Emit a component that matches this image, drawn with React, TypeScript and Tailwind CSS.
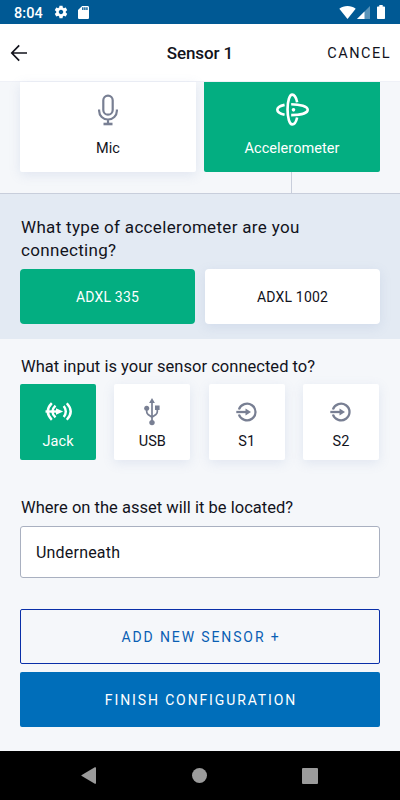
import type { ReactNode } from "react";
import clsx from "clsx";

const INPUTS = [
  { label: "Jack", icon: <JackIcon />, active: true },
  { label: "USB", icon: <UsbIcon />, active: false },
  { label: "S1", icon: <InputIcon />, active: false },
  { label: "S2", icon: <InputIcon />, active: false },
];

function StatusBar() {
  return (
    <div className="flex h-6 shrink-0 items-center bg-[#005994] pl-[14px] pr-[15px] text-white">
      <span className="w-[40px] pt-[3px] text-[14.5px] font-medium leading-6 tracking-[0.1px]">8:04</span>
      <svg className="h-[14px] w-[14px]" viewBox="1 1 22 22" fill="currentColor">
        <path d="M19.43 12.98c.04-.32.07-.64.07-.98s-.03-.66-.07-.98l2.11-1.65c.19-.15.24-.42.12-.64l-2-3.46c-.12-.22-.39-.3-.61-.22l-2.49 1c-.52-.4-1.08-.73-1.69-.98l-.38-2.65C14.46 2.18 14.25 2 14 2h-4c-.25 0-.46.18-.49.42l-.38 2.65c-.61.25-1.17.59-1.69.98l-2.49-1c-.23-.09-.49 0-.61.22l-2 3.46c-.13.22-.07.49.12.64l2.11 1.65c-.04.32-.07.65-.07.98s.03.66.07.98l-2.11 1.65c-.19.15-.24.42-.12.64l2 3.46c.12.22.39.3.61.22l2.49-1c.52.4 1.08.73 1.69.98l.38 2.65c.03.24.24.42.49.42h4c.25 0 .46-.18.49-.42l.38-2.65c.61-.25 1.17-.59 1.69-.98l2.49 1c.23.09.49 0 .61-.22l2-3.46c.12-.22.07-.49-.12-.64l-2.11-1.65zM12 15.5c-1.93 0-3.5-1.57-3.5-3.5s1.57-3.5 3.5-3.5 3.5 1.57 3.5 3.5-1.57 3.5-3.5 3.5z" />
      </svg>
      <svg className="ml-[10px] h-[13px] w-[11px]" viewBox="4 2 16 20" preserveAspectRatio="none" fill="currentColor">
        <path d="M18 2h-8L4.02 8 4 20c0 1.1.9 2 2 2h12c1.1 0 2-.9 2-2V4c0-1.1-.9-2-2-2zm-6 6h-2V4h2v4zm3 0h-2V4h2v4zm3 0h-2V4h2v4z" />
      </svg>
      <svg className="ml-auto h-[13px] w-[17px]" viewBox="0 0 17 13" fill="currentColor">
        <path d="M8.5 13 .3 2.8C2.6 1 5.4 0 8.5 0s5.9 1 8.2 2.8z" />
      </svg>
      <svg className="ml-px h-[13px] w-[13px]" viewBox="0 0 13 13" fill="currentColor">
        <path d="M13 0v13H0z" fillOpacity="0.35" />
        <path d="M7.5 5.5V13H0z" />
      </svg>
      <svg className="ml-[7px] h-[14px] w-[8px]" viewBox="0 0 8 14" fill="currentColor">
        <path d="M2.3 0h3.4v1.4h1.5q.8 0 .8.8v11q0 .8-.8.8H.8q-.8 0-.8-.8v-11q0-.8.8-.8h1.5z" />
      </svg>
    </div>
  );
}

function MicIcon() {
  return (
    <svg className="h-[32px] w-[20px]" viewBox="0 0 20 32" fill="none" stroke="#787f93" strokeWidth="2.2">
      <rect x="5.3" y="1.6" width="9.4" height="19" rx="4.7" />
      <path d="M1.1 15.5v1.3a8.9 8.7 0 0 0 17.8 0v-1.3M10 25.500v4.500" />
      <path d="M5.5 30h9" strokeWidth="2.6" />
    </svg>
  );
}

function AccelerometerIcon() {
  return (
    <svg className="h-[33px] w-[33px]" viewBox="0 0 100 100" fill="none" stroke="white" strokeWidth="8">
      <path d="M64 28C61 13 56 5 49 5C41 5 35 25 35 50S41 95 49 95C56 95 61 88 64 74" />
      <path d="M26 36C12 39 4 45 4 51S12 63 26 66" />
      <path d="M46 34C74 34 96 41 96 51S74 67 46 67" />
      <circle cx="53" cy="51" r="5.5" fill="white" stroke="none" />
    </svg>
  );
}

function JackIcon() {
  return (
    <svg className="h-[19px] w-[27px]" viewBox="0 0 27 19" fill="none" stroke="white" strokeWidth="2.4">
      <path d="M6.8 1.2Q-1.2 9.5 6.8 17.8M10.5 3.6Q4.3 9.5 10.5 15.4" />
      <path d="M21.8 1.2Q29.6 9.5 21.8 17.8M18.7 4Q22.9 9.5 18.7 15" />
      <path d="M.5 9.5h12" />
      <path d="M11 6.2v6.6l7.2-3.3z" fill="white" stroke="none" />
    </svg>
  );
}

function UsbIcon() {
  return (
    <svg className="h-[28px] w-[16px]" viewBox="0 0 16 28" fill="#787f93">
      <path d="M8 3v21M2.7 10.5v3.3q0 1.6 1.4 2.7L8 19.3l3.9-2.8q1.4-1.1 1.4-2.7V10" fill="none" stroke="#787f93" strokeWidth="1.7" />
      <path d="M8 0l2.9 5H5.1zM11 7.5h4.6v4.4H11z" />
      <circle cx="2.7" cy="10.3" r="2.5" />
      <circle cx="8" cy="24.6" r="2.7" />
    </svg>
  );
}

function InputIcon() {
  return (
    <svg className="h-[20px] w-[22px]" viewBox="0 0 22 20" fill="none" stroke="#787f93" strokeWidth="2.3">
      <path d="M2.9 7.500a8.500 8.300 0 1 1 0 5" />
      <path d="M.3 10h11" />
      <path d="M9.5 6.600v6.800l5.500-3.400z" fill="#787f93" stroke="none" />
    </svg>
  );
}

function Question({ large, children }: { large?: boolean; children: ReactNode }) {
  return (
    <h2
      className={clsx(
        "whitespace-nowrap pl-px leading-[23px]",
        large ? "text-[17px] tracking-[0.32px]" : "text-[16.5px] tracking-[0.02px]"
      )}
    >
      {children}
    </h2>
  );
}

export default function App() {
  return (
    <div className="flex h-[800px] w-[400px] flex-col overflow-hidden bg-[#f5f7fa] font-['Roboto',sans-serif] text-[#12131c]">
      <StatusBar />

      <header className="grid h-[58px] shrink-0 grid-cols-[1fr_auto_1fr] items-center border-b border-[#eff1f7] bg-white px-[10px]">
        <svg className="h-[18px] w-[18px]" viewBox="0 0 18 18" fill="none" stroke="currentColor" strokeWidth="1.7">
          <path d="M17 9H1.8M9.2 1.4 1.8 9l7.4 7.6" />
        </svg>
        <h1 className="pt-[2px] text-[17px] font-medium tracking-[-0.1px]">Sensor 1</h1>
        <button className="-mr-px justify-self-end pt-[3px] text-[14.5px] tracking-[1.5px]">CANCEL</button>
      </header>

      <main className="flex min-h-0 flex-1 flex-col">
        <div className="grid h-[90px] shrink-0 grid-cols-2 gap-2 px-5">
          <button className="flex flex-col items-center rounded-b-[2px] bg-white pt-[12px] shadow-[0_3px_12px_rgba(120,145,190,0.16)]">
            <MicIcon />
            <span className="mt-[13px] text-[14.5px] leading-5 tracking-[0.1px]">Mic</span>
          </button>
          <button className="flex flex-col items-center rounded-b-[2px] bg-[#03ae81] pt-[11px] text-white">
            <AccelerometerIcon />
            <span className="mt-[13px] text-[14.5px] leading-5 tracking-[0.05px]">Accelerometer</span>
          </button>
        </div>
        <div className="ml-[291px] h-[21px] w-px shrink-0 bg-[#c8cedb]" />

        <section className="h-[146px] shrink-0 border-t border-[#c8cedb] bg-[#e3eaf3] px-5 pt-[22px]">
          <Question large>
            What type of accelerometer are you
            <br />
            connecting?
          </Question>
          <div className="mt-[7px] grid h-[55px] grid-cols-2 gap-[10px] text-[14px] tracking-[0.2px]">
            <button className="rounded-[4px] bg-[#03ae81] pt-[2px] text-white">ADXL 335</button>
            <button className="rounded-[4px] bg-white pt-[2px] shadow-[0_3px_12px_rgba(120,145,190,0.16)]">ADXL 1002</button>
          </div>
        </section>

        <section className="pl-5 pr-[21px] pt-[16px]">
          <Question>What input is your sensor connected to?</Question>
          <div className="mt-[6px] flex justify-between">
            {INPUTS.map(({ label, icon, active }) => (
              <button
                key={label}
                className={clsx(
                  "flex h-[76px] w-[76px] flex-col items-center rounded-[2px]",
                  active ? "bg-[#03ae81] text-white" : "bg-white shadow-[0_3px_12px_rgba(120,145,190,0.16)]"
                )}
              >
                <span className="mt-[13px] flex h-[29px] items-center">{icon}</span>
                <span className="mt-[6px] text-[14.5px] leading-5 tracking-[0.1px]">{label}</span>
              </button>
            ))}
          </div>
        </section>

        <section className="px-5 pt-[36px]">
          <Question>Where on the asset will it be located?</Question>
          <input
            className="mt-[7px] block h-[52px] w-full rounded-[3px] border border-[#a9b0c0] bg-white px-[15px] pt-px text-[16px] tracking-[0.2px] outline-none"
            defaultValue="Underneath"
          />
        </section>

        <div className="mt-[31px] flex flex-col gap-2 px-5 text-[14px] tracking-[1.88px]">
          <button className="h-[55px] rounded-[2px] border border-[#0a2fa8] pl-[2px] pt-[2px] text-[#0a5fb4]">ADD NEW SENSOR +</button>
          <button className="h-[55px] rounded-[2px] bg-[#006eba] pl-[2px] pt-[2px] text-white">FINISH CONFIGURATION</button>
        </div>
      </main>

      <nav className="flex h-[49px] shrink-0 items-center justify-between bg-black pl-[81px] pr-[82px]">
        <svg className="h-[17px] w-[15px]" viewBox="0 0 15 17" fill="#9b9b9b">
          <path d="M13.8.3Q15-.2 15 1v15q0 1.200-1.200.700L.8 9.100q-.9-.6 0-1.200z" />
        </svg>
        <span className="h-[15px] w-[15px] rounded-full bg-[#9b9b9b]" />
        <span className="h-4 w-4 rounded-[1px] bg-[#9b9b9b]" />
      </nav>
    </div>
  );
}
